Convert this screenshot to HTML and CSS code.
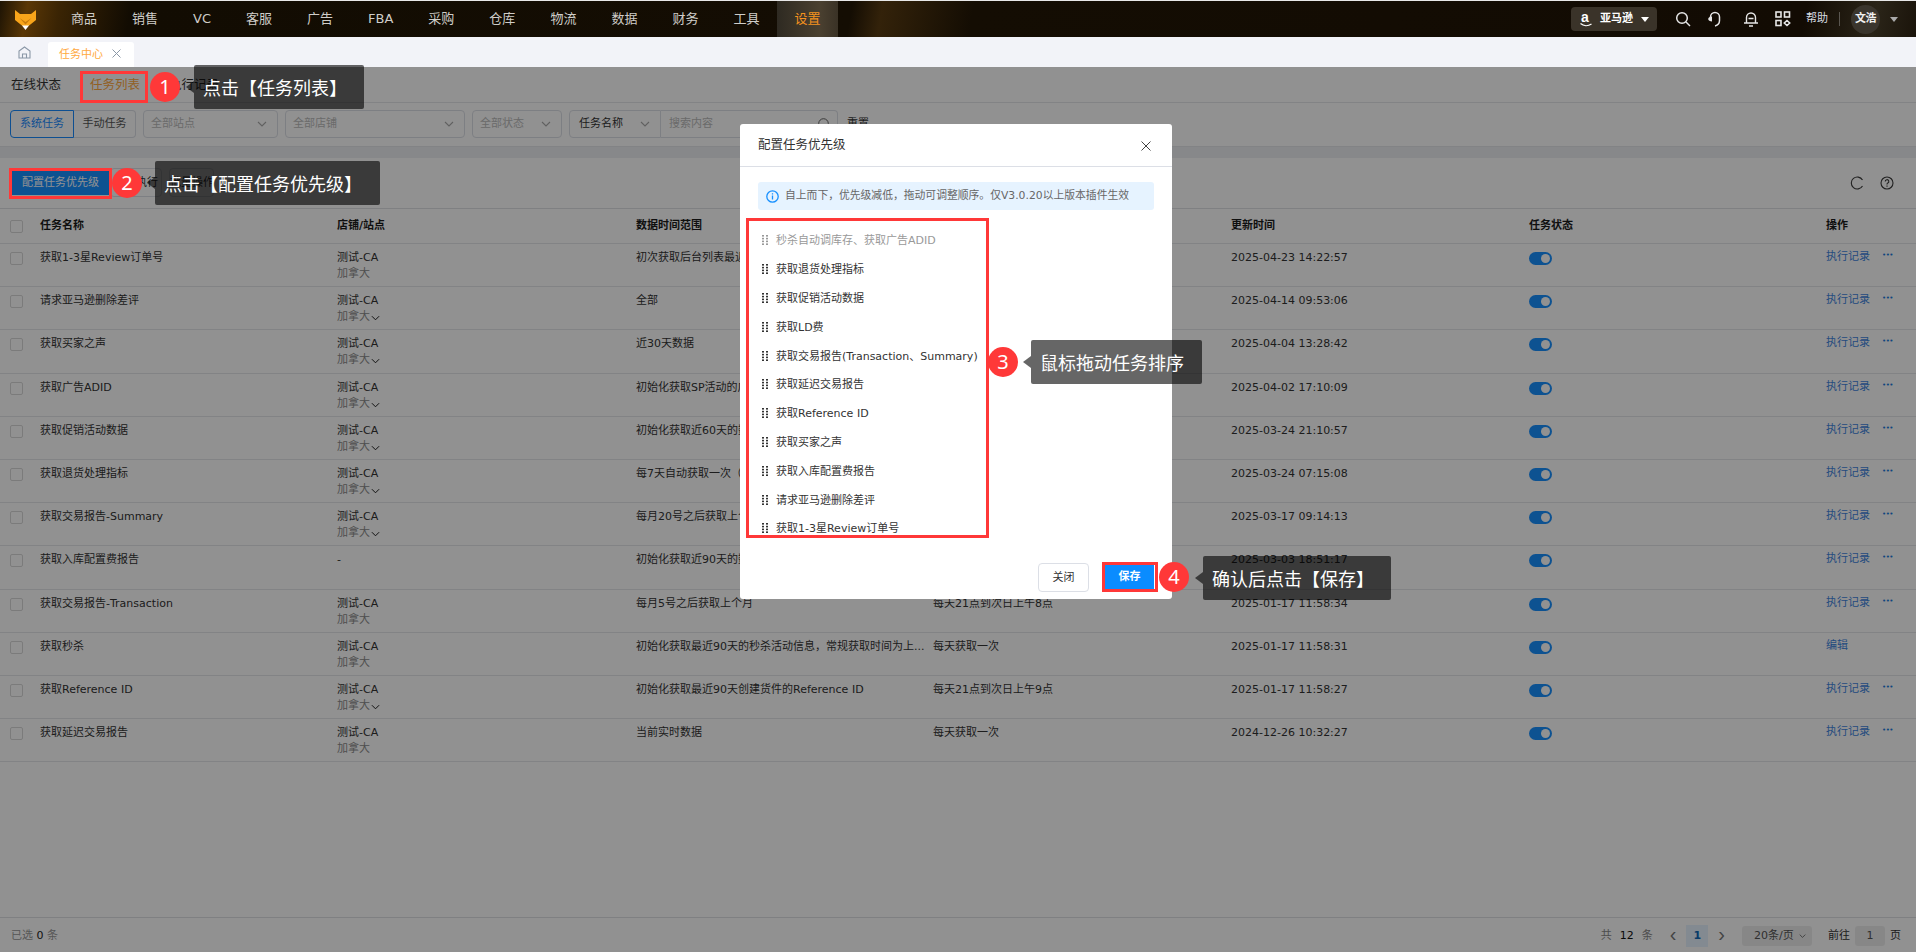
FILE: index.html
```html
<!DOCTYPE html>
<html lang="zh-CN">
<head>
<meta charset="utf-8">
<title>任务中心</title>
<link rel="stylesheet" href="styles.css">
</head>
<body>
<svg class="defs" width="0" height="0" aria-hidden="true">
  <symbol id="chev" viewBox="0 0 10 6"><path d="M1 1l4 4 4-4" fill="none" stroke="currentColor" stroke-width="1.1"/></symbol>
  <symbol id="grip" viewBox="0 0 6 10"><g fill="currentColor"><rect x="0" y="0" width="2" height="1.6"/><rect x="4" y="0" width="2" height="1.6"/><rect x="0" y="2.8" width="2" height="1.6"/><rect x="4" y="2.8" width="2" height="1.6"/><rect x="0" y="5.6" width="2" height="1.6"/><rect x="4" y="5.6" width="2" height="1.6"/><rect x="0" y="8.4" width="2" height="1.6"/><rect x="4" y="8.4" width="2" height="1.6"/></g></symbol>
</svg>
<div class="app">
  <header class="topbar">
    <div class="logo">
      <svg width="21" height="21" viewBox="0 0 21 21"><path d="M0 1l5 4h11l5-4v10l-7.500 6h-6L0 11z" fill="#f9a51a"/><path d="M7 16.500h7L10.500 21z" fill="#fff"/><path d="M4.500 9l6 4 6-4-6 6.500z" fill="#c97c0c"/></svg>
    </div>
    <nav class="nav">
      <a class="nav-item">商品</a><a class="nav-item">销售</a><a class="nav-item">VC</a><a class="nav-item">客服</a><a class="nav-item">广告</a><a class="nav-item">FBA</a><a class="nav-item">采购</a><a class="nav-item">仓库</a><a class="nav-item">物流</a><a class="nav-item">数据</a><a class="nav-item">财务</a><a class="nav-item">工具</a><a class="nav-item nav-active">设置</a>
    </nav>
    <div class="top-right">
      <div class="market">
        <span class="amz"><span class="amz-a">a</span><svg class="amz-smile" width="12" height="4" viewBox="0 0 12 4"><path d="M0.500 0.500c3 2.600 7.500 2.800 11 0.400" fill="none" stroke="#fff" stroke-width="1.200"/></svg></span>
        <span class="market-name">亚马逊</span>
        <i class="caret caret-white"></i>
      </div>
      <svg class="ti ti-search" width="16" height="16" viewBox="0 0 16 16"><circle cx="7" cy="7" r="5.300" fill="none" stroke="#e6e6e6" stroke-width="1.500"/><path d="M11 11l4 4" stroke="#e6e6e6" stroke-width="1.500"/></svg>
      <svg class="ti ti-head" width="16" height="16" viewBox="0 0 16 16"><path d="M3.500 7V6a4.500 4.500 0 0 1 9 0v3.500c0 2.700-1.700 4.800-4.500 5.500" fill="none" stroke="#e6e6e6" stroke-width="1.500"/><path d="M5 5.500v5C3 10.500 1.200 9.500 1.200 8S3 5.500 5 5.500z" fill="#e6e6e6"/></svg>
      <svg class="ti ti-bell" width="16" height="16" viewBox="0 0 16 16"><path d="M3.500 11.500V6.500a4.500 4.500 0 0 1 9 0v5M1 12h14M6 15h4M5.500 7.500h5" fill="none" stroke="#e6e6e6" stroke-width="1.400"/></svg>
      <svg class="ti ti-grid" width="16" height="16" viewBox="0 0 16 16"><g fill="none" stroke="#e6e6e6" stroke-width="1.600"><rect x="1" y="1" width="5" height="5"/><rect x="9.500" y="1" width="5" height="5"/><rect x="1" y="9.500" width="5" height="5"/><path d="M12 9.500l2.700 2.500-2.700 2.500-2.700-2.500z"/></g></svg>
      <span class="help">帮助</span>
      <span class="vsep"></span>
      <span class="avatar">文浩</span>
      <i class="caret caret-gray"></i>
    </div>
  </header>

  <div class="tabbar">
    <svg class="home" width="13" height="13" viewBox="0 0 13 13"><path d="M1 12V5l5.500-4L12 5v7zM4.500 12V8h4v4" fill="none" stroke="#8a97a6" stroke-width="1.100"/></svg>
    <div class="tab"><span>任务中心</span><svg class="tab-x" width="9" height="9" viewBox="0 0 9 9"><path d="M.5.500l8 8M8.500.500l-8 8" stroke="#8a97a6" stroke-width="1"/></svg></div>
  </div>

  <main class="page">
    <div class="subtabs">
      <span class="subtab">在线状态</span>
      <span class="subtab subtab-on">任务列表</span>
      <span class="subtab">执行记录</span>
    </div>
    <div class="filters">
      <div class="seg"><span class="seg-item seg-on">系统任务</span><span class="seg-item">手动任务</span></div>
      <div class="sel sel-site">全部站点<svg class="chev"><use href="#chev"/></svg></div>
      <div class="sel sel-shop">全部店铺<svg class="chev"><use href="#chev"/></svg></div>
      <div class="sel sel-state">全部状态<svg class="chev"><use href="#chev"/></svg></div>
      <div class="combo">
        <div class="combo-key">任务名称<svg class="chev"><use href="#chev"/></svg></div>
        <div class="combo-input">搜索内容<svg class="combo-search" width="12" height="12" viewBox="0 0 12 12"><circle cx="5.500" cy="5.500" r="4.800" fill="none" stroke="#666" stroke-width="1"/></svg></div>
      </div>
      <span class="reset">重置</span>
    </div>
    <div class="band"></div>
    <div class="toolbar">
      <button class="btn-primary">配置任务优先级</button>
      <button class="btn-plain btn-a">立即执行</button>
      <button class="btn-plain btn-b">批量操作</button>
      <div class="tool-icons">
        <svg width="14" height="14" viewBox="0 0 14 14"><path d="M12.500 4A6 6 0 1 0 12.500 10" fill="none" stroke="#3a3a3a" stroke-width="1.100"/></svg>
        <svg width="14" height="14" viewBox="0 0 14 14"><circle cx="7" cy="7" r="6" fill="none" stroke="#3a3a3a" stroke-width="1.100"/><path d="M5.200 5.500a1.800 1.800 0 1 1 2.600 1.600c-.6.300-.8.700-.8 1.300M7 9.600v1.200" fill="none" stroke="#3a3a3a" stroke-width="1.100"/></svg>
      </div>
    </div>

    <div class="table">
      <div class="row head">
        <div class="c-check"><i class="cb"></i></div>
        <div class="c-name">任务名称</div><div class="c-shop">店铺/站点</div><div class="c-range">数据时间范围</div><div class="c-freq">更新频率</div><div class="c-time">更新时间</div><div class="c-state">任务状态</div><div class="c-op">操作</div>
      </div>

      <div class="row">
        <div class="c-check"><i class="cb"></i></div><div class="c-name">获取1-3星Review订单号</div>
        <div class="c-shop"><div>测试-CA</div><div class="site">加拿大</div></div>
        <div class="c-range">初次获取后台列表最近90天数据</div><div class="c-freq">每天获取一次</div><div class="c-time">2025-04-23 14:22:57</div>
        <div class="c-state"><i class="sw"></i></div><div class="c-op"><a class="link">执行记录</a><span class="more">•••</span></div>
      </div>
      <div class="row">
        <div class="c-check"><i class="cb"></i></div><div class="c-name">请求亚马逊删除差评</div>
        <div class="c-shop"><div>测试-CA</div><div class="site">加拿大<svg class="chev-s"><use href="#chev"/></svg></div></div>
        <div class="c-range">全部</div><div class="c-freq">每天获取一次</div><div class="c-time">2025-04-14 09:53:06</div>
        <div class="c-state"><i class="sw"></i></div><div class="c-op"><a class="link">执行记录</a><span class="more">•••</span></div>
      </div>
      <div class="row">
        <div class="c-check"><i class="cb"></i></div><div class="c-name">获取买家之声</div>
        <div class="c-shop"><div>测试-CA</div><div class="site">加拿大<svg class="chev-s"><use href="#chev"/></svg></div></div>
        <div class="c-range">近30天数据</div><div class="c-freq">每天获取一次</div><div class="c-time">2025-04-04 13:28:42</div>
        <div class="c-state"><i class="sw"></i></div><div class="c-op"><a class="link">执行记录</a><span class="more">•••</span></div>
      </div>
      <div class="row">
        <div class="c-check"><i class="cb"></i></div><div class="c-name">获取广告ADID</div>
        <div class="c-shop"><div>测试-CA</div><div class="site">加拿大<svg class="chev-s"><use href="#chev"/></svg></div></div>
        <div class="c-range">初始化获取SP活动的广告ADID</div><div class="c-freq">每天获取一次</div><div class="c-time">2025-04-02 17:10:09</div>
        <div class="c-state"><i class="sw"></i></div><div class="c-op"><a class="link">执行记录</a><span class="more">•••</span></div>
      </div>
      <div class="row">
        <div class="c-check"><i class="cb"></i></div><div class="c-name">获取促销活动数据</div>
        <div class="c-shop"><div>测试-CA</div><div class="site">加拿大<svg class="chev-s"><use href="#chev"/></svg></div></div>
        <div class="c-range">初始化获取近60天的数据</div><div class="c-freq">每天获取一次</div><div class="c-time">2025-03-24 21:10:57</div>
        <div class="c-state"><i class="sw"></i></div><div class="c-op"><a class="link">执行记录</a><span class="more">•••</span></div>
      </div>
      <div class="row">
        <div class="c-check"><i class="cb"></i></div><div class="c-name">获取退货处理指标</div>
        <div class="c-shop"><div>测试-CA</div><div class="site">加拿大<svg class="chev-s"><use href="#chev"/></svg></div></div>
        <div class="c-range">每7天自动获取一次（近30天）</div><div class="c-freq">每天获取一次</div><div class="c-time">2025-03-24 07:15:08</div>
        <div class="c-state"><i class="sw"></i></div><div class="c-op"><a class="link">执行记录</a><span class="more">•••</span></div>
      </div>
      <div class="row">
        <div class="c-check"><i class="cb"></i></div><div class="c-name">获取交易报告-Summary</div>
        <div class="c-shop"><div>测试-CA</div><div class="site">加拿大<svg class="chev-s"><use href="#chev"/></svg></div></div>
        <div class="c-range">每月20号之后获取上个月</div><div class="c-freq">每天获取一次</div><div class="c-time">2025-03-17 09:14:13</div>
        <div class="c-state"><i class="sw"></i></div><div class="c-op"><a class="link">执行记录</a><span class="more">•••</span></div>
      </div>
      <div class="row">
        <div class="c-check"><i class="cb"></i></div><div class="c-name">获取入库配置费报告</div>
        <div class="c-shop"><div>-</div></div>
        <div class="c-range">初始化获取近90天的数据</div><div class="c-freq">每天获取一次</div><div class="c-time">2025-03-03 18:51:17</div>
        <div class="c-state"><i class="sw"></i></div><div class="c-op"><a class="link">执行记录</a><span class="more">•••</span></div>
      </div>
      <div class="row">
        <div class="c-check"><i class="cb"></i></div><div class="c-name">获取交易报告-Transaction</div>
        <div class="c-shop"><div>测试-CA</div><div class="site">加拿大</div></div>
        <div class="c-range">每月5号之后获取上个月</div><div class="c-freq">每天21点到次日上午8点</div><div class="c-time">2025-01-17 11:58:34</div>
        <div class="c-state"><i class="sw"></i></div><div class="c-op"><a class="link">执行记录</a><span class="more">•••</span></div>
      </div>
      <div class="row">
        <div class="c-check"><i class="cb"></i></div><div class="c-name">获取秒杀</div>
        <div class="c-shop"><div>测试-CA</div><div class="site">加拿大</div></div>
        <div class="c-range">初始化获取最近90天的秒杀活动信息，常规获取时间为上...</div><div class="c-freq">每天获取一次</div><div class="c-time">2025-01-17 11:58:31</div>
        <div class="c-state"><i class="sw"></i></div><div class="c-op"><a class="link">编辑</a></div>
      </div>
      <div class="row">
        <div class="c-check"><i class="cb"></i></div><div class="c-name">获取Reference ID</div>
        <div class="c-shop"><div>测试-CA</div><div class="site">加拿大<svg class="chev-s"><use href="#chev"/></svg></div></div>
        <div class="c-range">初始化获取最近90天创建货件的Reference ID</div><div class="c-freq">每天21点到次日上午9点</div><div class="c-time">2025-01-17 11:58:27</div>
        <div class="c-state"><i class="sw"></i></div><div class="c-op"><a class="link">执行记录</a><span class="more">•••</span></div>
      </div>
      <div class="row">
        <div class="c-check"><i class="cb"></i></div><div class="c-name">获取延迟交易报告</div>
        <div class="c-shop"><div>测试-CA</div><div class="site">加拿大</div></div>
        <div class="c-range">当前实时数据</div><div class="c-freq">每天获取一次</div><div class="c-time">2024-12-26 10:32:27</div>
        <div class="c-state"><i class="sw"></i></div><div class="c-op"><a class="link">执行记录</a><span class="more">•••</span></div>
      </div>
    </div>

    <footer class="footer">
      <div class="picked">已选 <b>0</b> 条</div>
      <div class="pager">
        <span class="muted">共</span><span class="total">12</span><span class="muted">条</span>
        <span class="pg-arrow pg-prev">‹</span>
        <span class="pg-cur">1</span>
        <span class="pg-arrow pg-next">›</span>
        <span class="pg-size">20条/页<svg class="chev"><use href="#chev"/></svg></span>
        <span class="pg-go">前往</span>
        <span class="pg-input">1</span>
        <span class="pg-go">页</span>
      </div>
    </footer>
    <div class="mask"></div>
  </main>

  <section class="modal">
    <div class="modal-head"><span>配置任务优先级</span><svg width="10" height="10" viewBox="0 0 10 10"><path d="M.5.500l9 9M9.500.500l-9 9" stroke="#444" stroke-width="1"/></svg></div>
    <div class="modal-body">
      <div class="alert">
        <svg width="13" height="13" viewBox="0 0 13 13"><circle cx="6.500" cy="6.500" r="5.700" fill="none" stroke="#1890ff" stroke-width="1.300"/><path d="M6.500 5.500v4M6.500 3.200v1.200" stroke="#1890ff" stroke-width="1.300"/></svg>
        <span>自上而下，优先级减低，拖动可调整顺序。仅V3.0.20以上版本插件生效</span>
      </div>
      <ul class="sort-list">
        <li class="sort-off"><svg class="grip"><use href="#grip"/></svg>秒杀自动调库存、获取广告ADID</li>
        <li><svg class="grip"><use href="#grip"/></svg>获取退货处理指标</li>
        <li><svg class="grip"><use href="#grip"/></svg>获取促销活动数据</li>
        <li><svg class="grip"><use href="#grip"/></svg>获取LD费</li>
        <li><svg class="grip"><use href="#grip"/></svg>获取交易报告(Transaction、Summary)</li>
        <li><svg class="grip"><use href="#grip"/></svg>获取延迟交易报告</li>
        <li><svg class="grip"><use href="#grip"/></svg>获取Reference ID</li>
        <li><svg class="grip"><use href="#grip"/></svg>获取买家之声</li>
        <li><svg class="grip"><use href="#grip"/></svg>获取入库配置费报告</li>
        <li><svg class="grip"><use href="#grip"/></svg>请求亚马逊删除差评</li>
        <li><svg class="grip"><use href="#grip"/></svg>获取1-3星Review订单号</li>
      </ul>
    </div>
    <div class="modal-foot">
      <button class="btn-close">关闭</button>
      <button class="btn-save">保存</button>
    </div>
  </section>

  <i class="mark mark-1"></i><i class="mark mark-2"></i><i class="mark mark-3"></i><i class="mark mark-4"></i>
  <span class="step step-1">1</span><span class="step step-2">2</span><span class="step step-3">3</span><span class="step step-4">4</span>
  <div class="tip tip-1">点击【任务列表】</div>
  <div class="tip tip-2">点击【配置任务优先级】</div>
  <div class="tip tip-3">鼠标拖动任务排序</div>
  <div class="tip tip-4">确认后点击【保存】</div>
</div>
</body>
</html>
```
FILE: styles.css
```css
* { box-sizing: border-box; }
html, body { margin: 0; height: 100%; }
body { font: 11px/16px "DejaVu Sans", "Noto Sans CJK SC", sans-serif; color: #222; background: #fff; overflow: hidden; }
.defs { position: absolute; }
i { display: block; font-style: normal; }
a { color: inherit; }
.app { position: relative; display: flex; flex-direction: column; width: 1916px; height: 952px; overflow: hidden; }

/* top bar */
.topbar { display: flex; align-items: center; height: 37px; flex: none; border-top: 1px solid #e8e8e8; color: #d6d3cf;
  background: linear-gradient(100deg, #1e1404 0, #5a3706 28px, #3a2404 60px, #120c02 130px, #140d03 840px, #33220a 870px, #140d03 960px, #120b03 1780px, #2a2418 1850px, #120b03 1916px); }
.logo { width: 53.5px; flex: none; padding-left: 15px; display: flex; align-items: center; }
.nav { display: flex; height: 100%; }
.nav-item { display: flex; align-items: center; padding: 0 17.5px; font-size: 13px; color: #cfcdc9; }
.nav-active { color: #f5921e; background: linear-gradient(90deg, #2e2a22, #4a4030 70%, #3a3226); }
.top-right { margin-left: auto; display: flex; align-items: center; height: 100%; }
.market { display: flex; align-items: center; width: 86px; height: 24px; margin-right: 18px; padding-left: 9px; background: #3a3329; border-radius: 4px; color: #fff; }
.amz { position: relative; display: block; width: 12px; height: 18px; }
.amz-a { position: absolute; left: 1px; top: -2px; font: 700 14px/18px "Liberation Sans", sans-serif; color: #fff; }
.amz-smile { position: absolute; left: 0; top: 13px; }
.market-name { margin-left: 8px; font-weight: 700; font-size: 11px; letter-spacing: 0; }
.caret { width: 0; height: 0; border-style: solid; border-width: 5px 4px 0; border-color: transparent; }
.caret-white { margin-left: 8px; border-top-color: #fff; }
.caret-gray { margin: 0 18px 0 10px; border-top-color: #aaa; }
.ti { flex: none; }
.ti-search { margin-right: 16px; }
.ti-head { margin-right: 20px; }
.ti-bell { margin-right: 16px; }
.ti-grid { margin-right: 15px; }
.help { color: #d8dde3; font-size: 11px; width: 20px; white-space: nowrap; }
.vsep { width: 1px; height: 14px; background: #5a5650; margin: 0 11px 0 13px; }
.avatar { width: 29px; height: 29px; border-radius: 50%; background: #3a352d; color: #f0f0f0; font-size: 11px; font-weight: 700; display: flex; align-items: center; justify-content: center; white-space: nowrap; letter-spacing: -.5px; }

/* tabs */
.tabbar { display: flex; align-items: flex-end; height: 30px; flex: none; background: #f2f3f8; padding-left: 18px; }
.home { align-self: center; margin-right: 17px; }
.tab { display: flex; align-items: center; width: 86px; height: 25px; padding-left: 11px; background: #fff; border-radius: 3px 3px 0 0; color: #ffa940; font-size: 11px; white-space: nowrap; }
.tab-x { margin: -2px 0 0 9px; }

/* page */
.page { position: relative; flex: 1; display: flex; flex-direction: column; min-height: 0; background: #fff; }
.subtabs { display: flex; align-items: center; height: 36px; flex: none; padding-left: 11px; border-bottom: 1px solid #e4e6ea; }
.subtab { width: 79px; font-size: 12.5px; color: #333; white-space: nowrap; }
.subtab-on { color: #ffa940; }
.filters { display: flex; align-items: flex-start; height: 44px; flex: none; padding: 7px 0 0 10px; border-bottom: 1px solid #e4e6ea; color: #bbb; }
.seg { display: flex; width: 126px; height: 28px; flex: none; margin-right: 7px; }
.seg-item { display: flex; align-items: center; justify-content: center; width: 62px; border: 1px solid #dcdfe6; border-left: 0; border-radius: 0 4px 4px 0; color: #555; }
.seg-on { width: 64px; border: 1px solid #1a8cff; border-radius: 4px 0 0 4px; color: #1a8cff; }
.sel { display: flex; align-items: center; justify-content: space-between; height: 28px; margin-right: 7px; padding: 0 10px 0 7px; border: 1px solid #dcdfe6; border-radius: 4px; flex: none; }
.sel-site { width: 135px; }
.sel-shop { width: 180px; }
.sel-state { width: 90px; }
.chev { width: 10px; height: 6px; flex: none; color: #aaa; }
.combo { display: flex; width: 269px; height: 28px; flex: none; }
.combo-key { display: flex; align-items: center; justify-content: space-between; width: 92px; padding: 0 10px 0 9px; border: 1px solid #dcdfe6; border-radius: 4px 0 0 4px; color: #333; }
.combo-input { display: flex; align-items: center; justify-content: space-between; flex: 1; padding: 0 7px 0 8px; border: 1px solid #dcdfe6; border-left: 0; border-radius: 0 4px 4px 0; }
.reset { margin: 6px 0 0 9px; color: #333; }
.band { height: 11px; flex: none; background: #eef0f2; }
.toolbar { position: relative; display: flex; align-items: center; height: 51px; flex: none; padding: 0 0 1px 11px; border-bottom: 1px solid #dfe1e4; }
.btn-primary { width: 99px; height: 25px; border: 0; padding: 0; background: #1890ff; color: #fff; font: inherit; font-size: 11px; }
.btn-plain { height: 29px; border: 1px solid #dcdfe6; border-radius: 4px; background: #fff; font: inherit; color: #333; padding: 0; white-space: nowrap; }
.btn-a { width: 52px; }
.btn-b { width: 45px; margin-left: 7px; overflow: hidden; }
.tool-icons { margin-left: auto; display: flex; gap: 16px; padding-right: 22px; }

/* table */
.table { flex: 1; min-height: 0; }
.row { display: flex; height: 43.2px; border-bottom: 1px solid #e4e6ea; padding-top: 6px; white-space: nowrap; color: #333; }
.row.head { height: 35px; font-weight: 700; color: #1c1c1c; align-items: center; padding-top: 0; }
.c-check { width: 40px; padding: 2px 0 0 10px; flex: none; }
.head .c-check { padding-top: 0; }
.c-name { width: 297px; flex: none; }
.c-shop { width: 299px; flex: none; }
.c-range { width: 297px; flex: none; overflow: hidden; }
.c-freq { width: 298px; flex: none; }
.c-time { width: 298px; flex: none; }
.c-state { width: 297px; flex: none; }
.c-op { flex: 1; }
.row:not(.head) .c-op { display: flex; margin-top: -1px; }
.site { color: #8c8c8c; display: flex; align-items: center; }
.chev-s { width: 9px; height: 6px; margin-left: 1px; margin-top: 2px; color: #1c1c1c; }
.cb { width: 13px; height: 13px; border: 1px solid #d9d9d9; border-radius: 2px; background: #fff; }
.sw { position: relative; width: 23px; height: 13px; margin-top: 2px; border-radius: 7px; background: #1890ff; }
.sw::after { content: ""; position: absolute; right: 2px; top: 2px; width: 9px; height: 9px; border-radius: 50%; background: #fff; }
.link { color: #3f86e0; }
.more { margin-left: 12px; color: #1a7ae0; font-size: 7px; letter-spacing: -.5px; line-height: 13px; }

/* footer */
.footer { display: flex; align-items: center; justify-content: space-between; height: 35.5px; flex: none; padding: 3px 0 0 11px; border-top: 1px solid #dfe1e4; }
.picked { color: #999; }
.picked b { color: #222; font-weight: 400; }
.pager { display: flex; align-items: center; height: 22px; margin-top: -1px; }
.muted { color: #888; }
.total { margin: 0 8px; color: #111; }
.pg-arrow { font: 20px/20px "Liberation Sans", sans-serif; color: #777; }
.pg-prev { margin: -3px 10px 0 17px; }
.pg-next { margin: -3px 17px 0 10px; }
.pg-cur { display: flex; align-items: center; justify-content: center; width: 22px; height: 22px; background: #e6f3ff; color: #1068b8; font-weight: 700; }
.pg-size { display: flex; align-items: center; justify-content: space-between; width: 70px; height: 20px; padding: 0 6px 0 12px; background: #eee; color: #555; border-radius: 3px; white-space: nowrap; margin-right: 16px; }
.pg-size .chev { width: 7px; color: #555; }
.pg-go { color: #333; white-space: nowrap; }
.pg-input { display: flex; align-items: center; justify-content: center; width: 30px; height: 20px; margin: 0 5px; background: #eee; border-radius: 3px; color: #555; }
.pager .pg-go:last-child { margin-right: 15px; }
.mask { position: absolute; inset: 0; background: rgba(0, 0, 0, .43); }

/* modal */
.modal { position: absolute; left: 740px; top: 124px; width: 432px; height: 475px; display: flex; flex-direction: column; background: #fff; border-radius: 3px; }
.modal-head { display: flex; align-items: center; justify-content: space-between; height: 43px; flex: none; padding: 0 21px 0 18px; border-bottom: 1px solid #dcdfe6; font-size: 12.5px; color: #333; }
.modal-head svg { margin-top: 2px; }
.modal-body { flex: 1; min-height: 0; padding: 15px 18px 0; }
.alert { display: flex; align-items: center; gap: 6px; height: 28px; padding-left: 8px; background: #e6f3ff; border-radius: 3px; color: #666; font-size: 10.8px; white-space: nowrap; }
.sort-list { list-style: none; margin: 17px 0 0; padding: 0; }
.sort-list li { display: flex; align-items: center; height: 28.8px; padding-left: 4px; color: #333; white-space: nowrap; }
.sort-list .sort-off { color: #999; }
.grip { width: 6px; height: 10px; margin-right: 8px; margin-top: -2px; color: #333; flex: none; }
.sort-off .grip { color: #999; }
.modal-foot { display: flex; gap: 16px; justify-content: flex-end; height: 36px; flex: none; padding: 0 18px 0 0; align-items: flex-start; }
.btn-close { width: 51px; height: 29px; background: #fff; border: 1px solid #dcdfe6; border-radius: 4px; color: #333; font: inherit; padding: 0; }
.btn-save { width: 49px; height: 27px; background: #0a8cff; border: 0; color: #fff; font: inherit; font-weight: 700; padding: 0; }

/* annotations */
.mark { position: absolute; border: 3px solid #ff3838; }
.mark-1 { left: 80px; top: 71px; width: 68px; height: 32px; }
.mark-2 { left: 9px; top: 168px; width: 103px; height: 31px; }
.mark-3 { left: 746px; top: 218px; width: 243px; height: 320px; }
.mark-4 { left: 1102px; top: 562px; width: 56px; height: 30px; }
.step { position: absolute; width: 30px; height: 30px; display: flex; align-items: center; justify-content: center; border-radius: 50%; background: #ff3838; color: #fff; font: 20px/30px "Noto Sans", sans-serif; }
.step-1 { left: 150px; top: 72px; }
.step-2 { left: 112px; top: 168px; }
.step-3 { left: 988px; top: 347px; }
.step-4 { left: 1159px; top: 562px; }
.tip { position: absolute; height: 44px; display: flex; align-items: center; padding-left: 9px; background: rgba(0, 0, 0, .6); border-radius: 2px; color: #fff; font: 18px/44px "Noto Sans CJK SC", sans-serif; white-space: nowrap; }
.tip::before { content: ""; position: absolute; left: -8px; top: 16px; width: 0; height: 0; border-style: solid; border-width: 6px 8px 6px 0; border-color: transparent rgba(0, 0, 0, .6) transparent transparent; }
.tip-1 { left: 194px; top: 65px; width: 170px; }
.tip-2 { left: 155px; top: 161px; width: 225px; }
.tip-3 { left: 1031px; top: 340px; width: 171px; }
.tip-4 { left: 1203px; top: 556px; width: 188px; }
```
